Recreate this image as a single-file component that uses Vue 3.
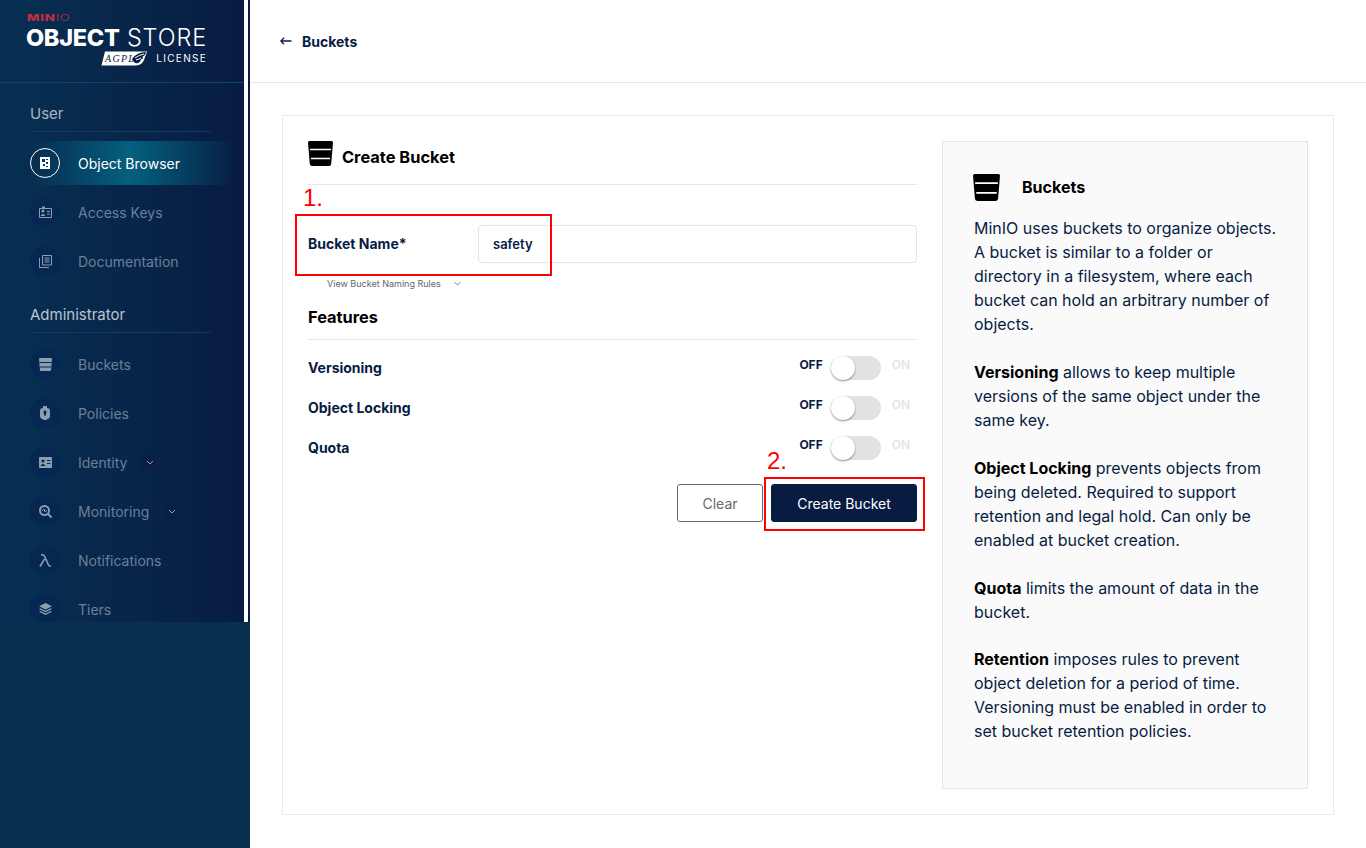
<script setup>
const userMenu = [
  { label: 'Object Browser', icon: 'browser', active: true },
  { label: 'Access Keys', icon: 'keys' },
  { label: 'Documentation', icon: 'docs' },
]
const adminMenu = [
  { label: 'Buckets', icon: 'bucket' },
  { label: 'Policies', icon: 'policy' },
  { label: 'Identity', icon: 'identity', caret: true },
  { label: 'Monitoring', icon: 'monitor', caret: true },
  { label: 'Notifications', icon: 'lambda' },
  { label: 'Tiers', icon: 'tiers' },
]
const features = ['Versioning', 'Object Locking', 'Quota']
const bucketPath = 'M1.500 0H23.500Q25 0 25 1.500L23.200 23Q23 25 21 25H4Q2 25 1.800 23L0 1.500Q0 0 1.500 0Z'
</script>

<template>
  <div class="page">
    <aside class="sidebar">
      <div class="sidebarInner">
        <div class="logo">
          <div class="minio"><b>MIN</b><span>IO</span></div>
          <div class="product"><b>OBJECT</b> <span>STORE</span></div>
          <div class="license">
            <svg class="agpl" width="46" height="15" viewBox="0 0 46 15">
              <path d="M4 .5H46L43 9Q41 14 35 14.500H.5Z" fill="#fff" />
              <text x="4" y="11" font-size="10" font-style="italic" font-family="Liberation Serif, serif" fill="#081c42">AGPL</text>
              <path d="M31 8Q36 1 45 1Q44 5 41 6Q44 7 39 9Q41 10 37 12Q33 13 31 8Z" fill="#081c42" />
              <path d="M34 7Q38 4 43 3M35 9Q38 8 40 7" stroke="#fff" fill="none" />
            </svg>
            <span>LICENSE</span>
          </div>
        </div>

        <div class="menu">
          <div class="groupTitle">User</div>
          <div v-for="item in userMenu" :key="item.label" class="menuItem" :class="{ active: item.active }">
            <span class="iconCircle">
              <svg v-if="item.icon === 'browser'" width="12" height="12" viewBox="0 0 12 12">
                <path d="M1 0H11V12H1Z" fill="#fff" />
                <path d="M3 2H6V5H3ZM7 5H9V7H7ZM4 7H6V9H4ZM7 2H9V3H7ZM7 9H9V10H7Z" fill="#0a3a5c" />
              </svg>
              <svg v-else-if="item.icon === 'keys'" width="13" height="12" viewBox="0 0 13 12">
                <path d="M.5 2.500H12.500V11.500H.5Z" fill="none" stroke="currentColor" />
                <circle cx="4" cy="5" r="1.500" fill="currentColor" />
                <path d="M1.500 10Q4 6 6.500 10ZM3 .5H6V2H3ZM8 5H11V6H8ZM8 7.500H11V8.500H8Z" fill="currentColor" />
              </svg>
              <svg v-else width="13" height="13" viewBox="0 0 13 13" fill="none" stroke="currentColor">
                <path d="M3.500.5H12.500V10H3.500ZM.5 3V12.500H10" />
                <path d="M5.500 3H10.500M5.500 5H10.500M5.500 7H10.500" />
              </svg>
            </span>
            <span class="menuLabel">{{ item.label }}</span>
          </div>

          <div class="groupTitle second">Administrator</div>
          <div v-for="item in adminMenu" :key="item.label" class="menuItem">
            <span class="iconCircle">
              <svg v-if="item.icon === 'bucket'" width="13" height="13" viewBox="0 0 25 25">
                <path :d="bucketPath" fill="currentColor" />
                <path d="M1 8.500H24M2 17.500H23" stroke="#052750" stroke-width="2" />
              </svg>
              <svg v-else-if="item.icon === 'policy'" width="10" height="14" viewBox="0 0 10 14" fill="currentColor">
                <path d="M3 0H7V2Q10 2 10 5V10Q10 13 7 13V14H3V13Q0 13 0 10V5Q0 2 3 2Z" />
                <path d="M5 4.500A1.500 1.500 0 0 1 6 7.200V9.500H4V7.200A1.500 1.500 0 0 1 5 4.500Z" fill="#052750" />
              </svg>
              <svg v-else-if="item.icon === 'identity'" width="13" height="11" viewBox="0 0 13 11" fill="currentColor">
                <path d="M1 0H12Q13 0 13 1V10Q13 11 12 11H1Q0 11 0 10V1Q0 0 1 0Z" />
                <circle cx="4" cy="4" r="1.500" fill="#052750" />
                <path d="M1.500 9Q4 5 6.500 9ZM8 3H11.500V4H8ZM8 6H11.500V7H8Z" fill="#052750" />
              </svg>
              <svg v-else-if="item.icon === 'monitor'" width="13" height="13" viewBox="0 0 13 13">
                <circle cx="5.500" cy="5.500" r="4.500" fill="none" stroke="currentColor" stroke-width="2" />
                <path d="M3 6L5 4L6 7L8 5" fill="none" stroke="currentColor" />
                <path d="M9 9L12.500 12.500" stroke="currentColor" stroke-width="2" />
              </svg>
              <svg v-else-if="item.icon === 'lambda'" width="12" height="13" viewBox="0 0 12 13" fill="none" stroke="currentColor" stroke-width="1.600">
                <path d="M1 12.500L5.500 5M2 .8Q5 .3 6 3L9 10Q10 12.500 12 12" />
              </svg>
              <svg v-else width="13" height="12" viewBox="0 0 13 12" fill="currentColor">
                <path d="M6.500 0L13 3.200L6.500 6.400L0 3.200Z" />
                <path d="M1.500 5.300L6.500 7.800L11.500 5.300L13 6L6.500 9.200L0 6ZM1.500 8.100L6.500 10.600L11.500 8.100L13 8.800L6.500 12L0 8.800Z" />
              </svg>
            </span>
            <span class="menuLabel">{{ item.label }}</span>
            <span v-if="item.caret" class="caret">
              <svg width="8" height="5" viewBox="0 0 8 5" fill="none" stroke="currentColor"><path d="M1 1L4 4L7 1" /></svg>
            </span>
          </div>
        </div>
      </div>
    </aside>

    <main class="main">
      <header class="topBar">
        <svg width="12" height="8" viewBox="0 0 12 8" fill="none" stroke="#081c42" stroke-width="1.300">
          <path d="M11.500 4H1M4 .8L.9 4L4 7.200" />
        </svg>
        <span>Buckets</span>
      </header>

      <div class="content">
        <section class="card">
          <form class="form" @submit.prevent>
            <div class="formTitle">
              <svg width="25" height="25" viewBox="0 0 25 25">
                <path :d="bucketPath" fill="#000" />
                <path d="M2 8.500H23M3 17.500H22" stroke="#fff" stroke-width="1.500" />
              </svg>
              <h1>Create Bucket</h1>
            </div>

            <div class="nameRow">
              <label>Bucket Name*</label>
              <input type="text" value="safety" />
            </div>
            <div class="rules">
              <span>View Bucket Naming Rules</span>
              <svg width="7" height="5" viewBox="0 0 7 5" fill="none" stroke="#5a6375" stroke-width=".8"><path d="M.5 1L3.500 4L6.500 1" /></svg>
            </div>

            <h2>Features</h2>
            <div class="features">
              <div v-for="name in features" :key="name" class="featureRow">
                <span class="featureName">{{ name }}</span>
                <div class="switchGroup">
                  <span class="off">OFF</span>
                  <span class="track"><span class="knob"></span></span>
                  <span class="on">ON</span>
                </div>
              </div>
            </div>

            <div class="buttons">
              <button type="button" class="clear">Clear</button>
              <button type="submit" class="create">Create Bucket</button>
            </div>
          </form>

          <div class="help">
            <div class="helpTitle">
              <svg width="27" height="27" viewBox="0 0 25 25">
                <path :d="bucketPath" fill="#000" />
                <path d="M2 8.500H23M3 17.500H22" stroke="#fff" stroke-width="1.500" />
              </svg>
              <span>Buckets</span>
            </div>
            <p>MinIO uses buckets to organize objects. A bucket is similar to a folder or directory in a filesystem, where each bucket can hold an arbitrary number of objects.</p>
            <p><b>Versioning</b> allows to keep multiple versions of the same object under the same key.</p>
            <p><b>Object Locking</b> prevents objects from being deleted. Required to support retention and legal hold. Can only be enabled at bucket creation.</p>
            <p><b>Quota</b> limits the amount of data in the bucket.</p>
            <p class="last"><b>Retention</b> imposes rules to prevent object deletion for a period of time. Versioning must be enabled in order to set bucket retention policies.</p>
          </div>
        </section>
      </div>
    </main>

    <!-- red marks drawn over the screenshot -->
    <div class="mark box1"></div>
    <div class="mark box2"></div>
    <span class="markText text1">1.</span>
    <span class="markText text2">2.</span>
  </div>
</template>

<style>
html, body {
  margin: 0;
  background: #fff;
}
</style>

<style scoped>
.page {
  position: relative;
  display: flex;
  height: 848px;
  overflow: hidden;
  font-family: Inter, "Liberation Sans", sans-serif;
  color: #081c42;
}

.sidebar {
  width: 250px;
  flex: none;
  background: #082f4f;
}

.sidebarInner {
  width: 244px;
  height: 622px;
  overflow: hidden;
  padding-right: 4px;
  border-right: 2px solid #081c42;
  background: linear-gradient(90deg, #073052 0%, #081c42 100%) no-repeat;
  background-size: 244px 100%;
  background-color: #fff;
}

.logo {
  height: 83px;
  width: 244px;
  box-sizing: border-box;
  padding: 15px 37px 0 26px;
  border-bottom: 1px solid #0d4468;
  color: #fff;
}

.minio {
  width: 28px;
  margin-left: 1px;
  font-size: 8.500px;
  line-height: 7px;
  letter-spacing: .5px;
  white-space: nowrap;
  color: #c72c48;
  transform: scaleX(1.55);
  transform-origin: left center;
}

.minio b {
  font-weight: 800;
}

.minio span {
  font-weight: 300;
}

.product {
  margin-top: 4px;
  font-size: 23.500px;
  line-height: 24px;
  letter-spacing: -.3px;
  font-weight: 300;
  white-space: nowrap;
}

.product b {
  font-weight: 800;
}

.product span {
  margin-left: 1px;
  letter-spacing: .9px;
}

.license {
  display: flex;
  align-items: center;
  justify-content: flex-end;
  gap: 9px;
  height: 16px;
  font-size: 10px;
  letter-spacing: 1.300px;
}

.menu {
  padding-top: 20px;
}

.groupTitle {
  width: 181px;
  margin-left: 30px;
  margin-bottom: 9px;
  height: 29px;
  box-sizing: border-box;
  border-bottom: 1px solid #0e3c63;
  font-size: 15px;
  line-height: 22px;
  color: #a9b6c4;
}

.groupTitle.second {
  margin-top: 21px;
  color: #b9c5d1;
}

.menuItem {
  display: flex;
  align-items: center;
  height: 44px;
  margin: 0 0 5px 30px;
  color: #6b8098;
}

.menuItem.active {
  width: 205px;
  color: #fff;
  background: linear-gradient(90deg, rgba(4, 96, 127, 0) 0%, #04607f 48%, rgba(4, 96, 127, 0) 100%);
}

.iconCircle {
  display: flex;
  align-items: center;
  justify-content: center;
  width: 30px;
  height: 30px;
  box-sizing: border-box;
  flex: none;
  border-radius: 50%;
  background: #052750;
  color: #8c9db0;
}

.active .iconCircle {
  background: transparent;
  border: 1px solid #fff;
  color: #fff;
}

.menuLabel {
  margin-left: 18px;
  font-size: 14px;
}

.caret {
  display: flex;
  align-items: center;
  justify-content: center;
  width: 15px;
  height: 15px;
  margin-left: 15px;
  margin-top: 1px;
  background: #0b1e44;
  color: #8c9db0;
}

.main {
  flex: 1;
  min-width: 0;
}

.topBar {
  display: flex;
  align-items: center;
  gap: 10px;
  height: 82px;
  padding-left: 30px;
  border-bottom: 1px solid #e5e5e5;
  font-size: 14px;
  font-weight: 700;
}

.content {
  padding: 32px;
}

.card {
  display: flex;
  gap: 25px;
  height: 700px;
  box-sizing: border-box;
  padding: 25px;
  border: 1px solid #eaeaea;
}

.form {
  flex: 1;
  min-width: 0;
}

.formTitle {
  display: flex;
  align-items: flex-start;
  gap: 9px;
  height: 44px;
  box-sizing: border-box;
  border-bottom: 1px solid #e5e5e5;
}

.formTitle h1 {
  margin: 5px 0 0;
  font-size: 16.400px;
  line-height: 22px;
  font-weight: 700;
  color: #000;
}

.nameRow {
  display: flex;
  align-items: center;
  margin-top: 40px;
}

.nameRow label {
  width: 170px;
  margin-top: -2px;
  font-size: 14px;
  font-weight: 700;
}

.nameRow input {
  flex: 1;
  min-width: 0;
  height: 38px;
  box-sizing: border-box;
  padding: 0 14px;
  border: 1px solid #e5e5e5;
  border-radius: 3px;
  outline: none;
  font-family: inherit;
  font-size: 13px;
  font-weight: 600;
  color: #081c42;
}

.rules {
  display: flex;
  align-items: center;
  gap: 13px;
  height: 14px;
  margin-top: 13px;
  padding-left: 19px;
  font-size: 9px;
  color: #5e6678;
}

.form h2 {
  height: 33px;
  margin: 16px 0 0;
  border-bottom: 1px solid #e5e5e5;
  font-size: 16.400px;
  line-height: 22px;
  font-weight: 700;
  color: #000;
}

.features {
  margin-top: 7px;
}

.featureRow {
  display: flex;
  align-items: center;
  justify-content: space-between;
  height: 40px;
}

.featureName {
  font-size: 14px;
  font-weight: 700;
}

.switchGroup {
  display: flex;
  align-items: center;
  margin-top: 2px;
  padding-right: 7px;
  font-size: 12px;
}

.off {
  margin-bottom: 8px;
  font-weight: 700;
}

.on {
  margin-left: 11px;
  margin-bottom: 8px;
  color: #e2e2e2;
  font-weight: 500;
}

.track {
  display: block;
  width: 50px;
  height: 24px;
  margin-left: 8px;
  border-radius: 12px;
  background: #e2e2e2;
}

.knob {
  display: block;
  width: 24px;
  height: 24px;
  border-radius: 50%;
  background: #fff;
  box-shadow: 0 1px 2px 0 rgba(0, 0, 0, .45);
}

.buttons {
  display: flex;
  justify-content: flex-end;
  gap: 8px;
  margin-top: 17px;
}

.buttons button {
  height: 38px;
  box-sizing: border-box;
  border-radius: 3px;
  font-family: inherit;
  font-size: 14px;
}

.clear {
  width: 86px;
  background: #fff;
  border: 1px solid #5e6678;
  color: #696969;
}

.create {
  width: 146px;
  background: #081c42;
  border: 1px solid #081c42;
  color: #fff;
}

.help {
  width: 366px;
  height: 648px;
  flex: none;
  box-sizing: border-box;
  padding: 30px 30px 0 31px;
  background: #fafafa;
  border: 1px solid #e5e5e5;
  font-size: 16px;
  line-height: 24px;
  color: #081c42;
}

.help b {
  font-weight: 700;
  color: #000;
}

.help p {
  margin: 0 0 24px;
}

.help p.last {
  margin-top: -1px;
}

.helpTitle {
  display: flex;
  align-items: center;
  gap: 22px;
  height: 30px;
  margin: 0 0 14px -1px;
  font-weight: 700;
  color: #000;
}

.mark {
  position: absolute;
  box-sizing: border-box;
  border: 2px solid #f00;
}

.box1 {
  left: 295px;
  top: 214px;
  width: 257px;
  height: 62px;
}

.box2 {
  left: 764px;
  top: 477px;
  width: 161px;
  height: 54px;
}

.markText {
  position: absolute;
  font-family: "Liberation Sans", sans-serif;
  font-size: 24px;
  line-height: 28px;
  color: #f00;
}

.text1 {
  left: 303px;
  top: 184px;
}

.text2 {
  left: 767px;
  top: 447px;
}
</style>
